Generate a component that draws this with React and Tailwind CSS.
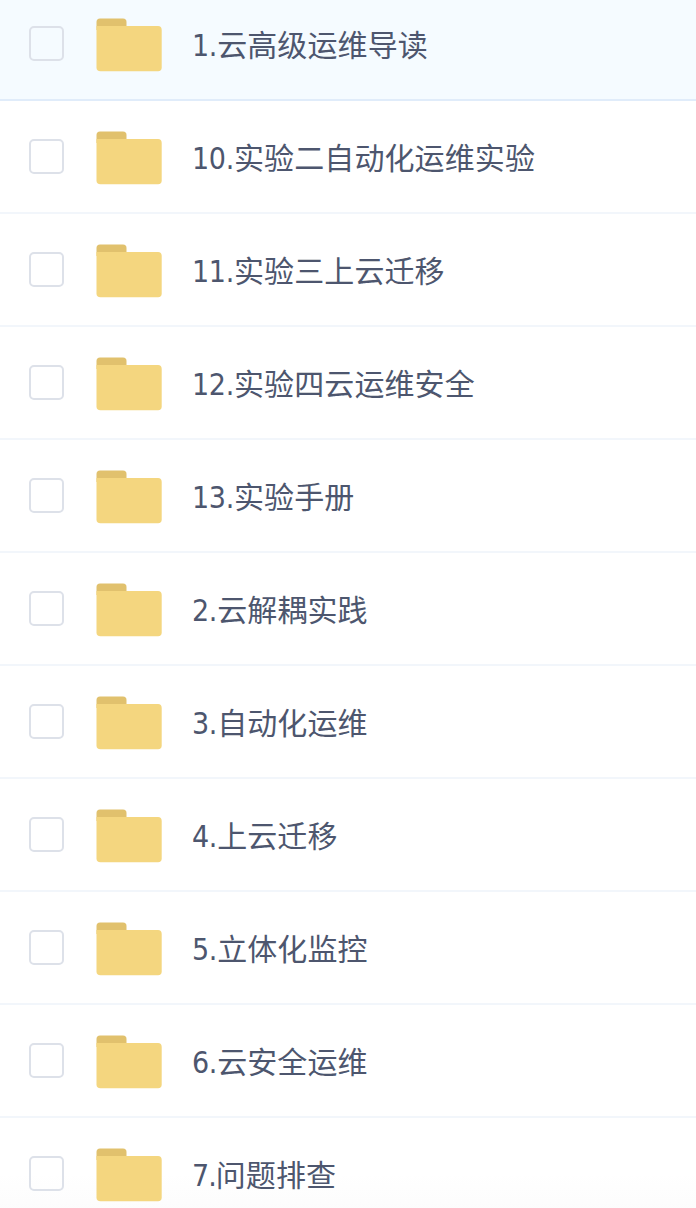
const folders = [
  { number: "1.", name: "云高级运维导读", active: true },
  { number: "10.", name: "实验二自动化运维实验" },
  { number: "11.", name: "实验三上云迁移" },
  { number: "12.", name: "实验四云运维安全" },
  { number: "13.", name: "实验手册" },
  { number: "2.", name: "云解耦实践" },
  { number: "3.", name: "自动化运维" },
  { number: "4.", name: "上云迁移" },
  { number: "5.", name: "立体化监控" },
  { number: "6.", name: "云安全运维" },
  { number: "7.", name: "问题排查", last: true },
];

function FolderIcon() {
  return (
    <svg width="66" height="54" viewBox="0 0 66 54" className="ml-8 mt-[2px] shrink-0">
      <path d="M0.5 12V4Q0.5 0.5 4 0.5H27Q30.5 0.5 30.5 4V12Z" fill="#e1c16d" />
      <path d="M0.5 8H62Q65.7 8 65.7 12V49.5Q65.7 53.3 62 53.3H4.5Q0.5 53.3 0.5 49.5Z" fill="#f4d67f" />
    </svg>
  );
}

function FolderRow({ number, name, active, last }) {
  return (
    <li
      className={`flex h-[113px] items-center border-b-2 pl-7 ${
        active ? "border-[#e0ecfa] bg-[#f5fbff]" : "border-[#f2f6fb]"
      } ${last ? "bg-linear-to-b from-white from-50% to-[#fbfbfb]" : ""}`}
    >
      <span
        role="checkbox"
        aria-checked="false"
        aria-label={number + name}
        className="ml-px size-[35px] shrink-0 rounded-[5px] border-2 border-[#dde1e9]"
      />
      <FolderIcon />
      <span className="ml-[30px] whitespace-nowrap pt-1 text-[30px] leading-[44px] text-[#4d566e]">
        <span className={last ? "tracking-[-1px]" : "tracking-[-0.3px]"}>{number}</span>
        <span className="tracking-[0.1px]">{name}</span>
      </span>
    </li>
  );
}

export default function App() {
  return (
    <div className="h-[1208px] w-[696px] overflow-hidden bg-white font-['DejaVu_Sans_Condensed','Noto_Sans_CJK_SC',sans-serif]">
      <ul className="-mt-3">
        {folders.map((f) => (
          <FolderRow key={f.number} {...f} />
        ))}
      </ul>
    </div>
  );
}
